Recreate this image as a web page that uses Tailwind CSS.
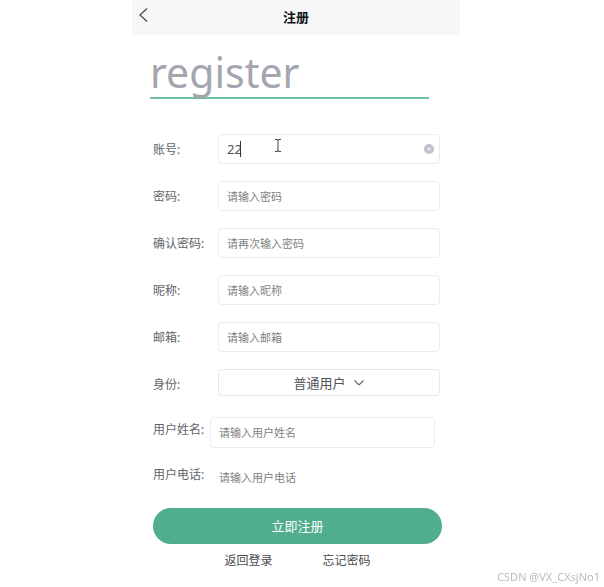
<!DOCTYPE html>
<html lang="zh-CN">
<head>
<meta charset="utf-8">
<meta name="viewport" content="width=device-width, initial-scale=1">
<title>注册</title>
<script src="https://cdn.jsdelivr.net/npm/@tailwindcss/browser@4"></script>
</head>
<body class="min-h-screen bg-white pr-3 font-['Noto_Sans','Noto_Sans_CJK_SC',sans-serif] text-xs text-[#626468]">
<div class="mx-auto w-full max-w-[328px]">
  <header class="grid h-[35px] grid-cols-[1fr_auto_1fr] items-center bg-[#f7f7f7] pb-0.5">
    <button type="button" aria-label="返回" class="ml-1.5 flex h-6 w-6 items-center justify-start pb-1">
      <svg class="h-4 w-3" viewBox="0 0 12 16" fill="none" stroke="#505050" stroke-width="1.3"><path d="M9 1.5 2 8l7 6.5"/></svg>
    </button>
    <h1 class="text-[13px] leading-4 font-bold text-[#111]">注册</h1>
  </header>

  <main class="px-[18px]">
    <div class="mr-[13px] flex h-16 items-end border-b-2 border-[#6fbfa4]">
      <h2 class="font-['Noto_Sans',sans-serif] text-[41px] leading-[50px] text-[#a5a5b0]">register</h2>
    </div>

    <form class="mt-[35px] ml-[3px]">
      <div class="grid grid-cols-[65px_1fr] gap-y-[17px] pr-0.5">
        <label for="account" class="self-center pt-0.5">账号:</label>
        <div class="relative h-[30px]">
          <input id="account" type="text" value="22" class="h-full w-full rounded border border-[#ececee] pr-6 pl-2 text-[13px] text-[#505256] outline-none">
          <span class="absolute top-[7px] left-[22px] h-4 w-px bg-[#333]"></span>
          <svg class="absolute top-1 left-14 h-4 w-2" viewBox="0 0 8 16" fill="none" stroke="#444" stroke-width="1"><path d="M1 1.5h2q1 0 1 1 0-1 1-1h2M4 2v11M1 13.5h2q1 0 1-1 0 1 1 1h2"/></svg>
          <button type="button" aria-label="清除" class="absolute top-[9px] right-[5px]">
            <svg class="h-3 w-3" viewBox="0 0 12 12"><circle cx="6" cy="6" r="5.1" fill="#c0c4cc"/><path d="m4.7 4.7 2.6 2.6m0-2.6L4.7 7.3" stroke="#f4f5f7" stroke-width="1"/></svg>
          </button>
        </div>

        <label for="password" class="self-center pt-0.5">密码:</label>
        <input id="password" type="password" placeholder="请输入密码" class="h-[30px] w-full min-w-0 rounded border border-[#ececee] px-2 text-[11px] outline-none placeholder:text-[#7d7f83]">

        <label for="confirm" class="self-center pt-0.5">确认密码:</label>
        <input id="confirm" type="password" placeholder="请再次输入密码" class="h-[30px] w-full min-w-0 rounded border border-[#ececee] px-2 text-[11px] outline-none placeholder:text-[#7d7f83]">

        <label for="nickname" class="self-center pt-0.5">昵称:</label>
        <input id="nickname" type="text" placeholder="请输入昵称" class="h-[30px] w-full min-w-0 rounded border border-[#ececee] px-2 text-[11px] outline-none placeholder:text-[#7d7f83]">

        <label for="email" class="self-center pt-0.5">邮箱:</label>
        <input id="email" type="email" placeholder="请输入邮箱" class="h-[30px] w-full min-w-0 rounded border border-[#ececee] px-2 text-[11px] outline-none placeholder:text-[#7d7f83]">

        <label for="role" class="self-center pt-0.5">身份:</label>
        <div class="relative h-[30px]">
          <select id="role" class="h-[27px] w-full appearance-none rounded border border-[#e8e8ea] pt-0.5 pr-[19px] text-center text-[13px] text-[#505256] [text-align-last:center]">
            <option>普通用户</option>
          </select>
          <svg class="pointer-events-none absolute top-2 left-[135px] h-3 w-3" viewBox="0 0 12 12" fill="none" stroke="#66686c" stroke-width="1.2"><path d="m1.5 3.5 4.5 4.5 4.5-4.5"/></svg>
        </div>
      </div>

      <div class="mt-[18px] grid grid-cols-[57px_1fr] gap-y-[15px] pr-[7px]">
        <label for="realname" class="self-center pb-1.5 whitespace-nowrap">用户姓名:</label>
        <input id="realname" type="text" placeholder="请输入用户姓名" class="h-[31px] w-full min-w-0 rounded border border-[#ececee] px-2 text-[11px] outline-none placeholder:text-[#7d7f83]">

        <label for="phone" class="self-center pb-1 whitespace-nowrap">用户电话:</label>
        <input id="phone" type="tel" placeholder="请输入用户电话" class="h-7 w-full min-w-0 rounded border border-transparent px-2 text-[11px] outline-none placeholder:text-[#7d7f83]">
      </div>

      <button type="submit" class="mt-[17px] block h-9 w-full rounded-full bg-[#50ae8e] pt-0.5 text-[13px] text-white">立即注册</button>
    </form>

    <nav class="mt-[7px] ml-[3px] flex justify-center gap-[50px] leading-5 text-[#484a4e]">
      <a href="#login">返回登录</a>
      <a href="#forgot">忘记密码</a>
    </nav>
  </main>
</div>
<p class="fixed right-1 bottom-0.5 font-['Noto_Sans',sans-serif] text-[11px] leading-4 text-[#bcbcbc]">CSDN @VX_CXsjNo1</p>
</body>
</html>
